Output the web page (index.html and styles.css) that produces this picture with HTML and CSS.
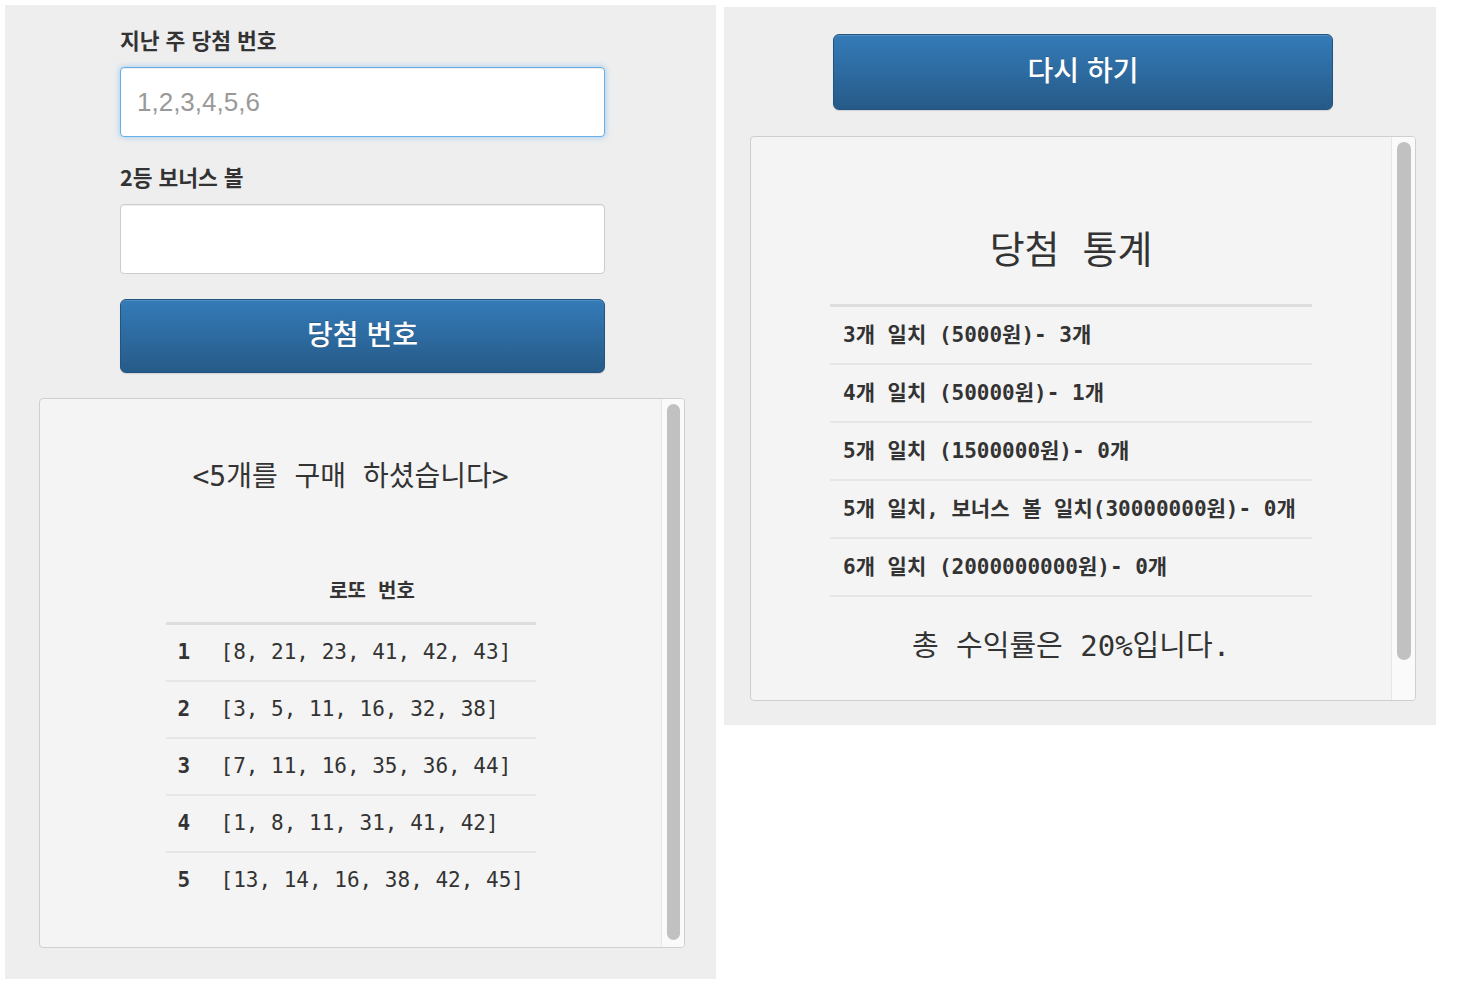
FILE: index.html
```html
<!DOCTYPE html>
<html lang="ko">
<head>
<meta charset="utf-8">
<title>로또</title>
<link rel="stylesheet" href="styles.css">
</head>
<body>
<div class="page">
  <section class="panel panel-left">
    <form class="form">
      <label class="label">지난 주 당첨 번호</label>
      <input class="input input-focus" type="text" placeholder="1,2,3,4,5,6">
      <label class="label label-second">2등 보너스 볼</label>
      <input class="input" type="text">
      <button class="btn btn-submit" type="button">당첨 번호</button>
    </form>
    <div class="box box-left">
      <div class="box-body">
        <h2 class="buy-title">&lt;5개를 구매 하셨습니다&gt;</h2>
        <table class="lotto">
          <colgroup><col class="col-no"><col></colgroup>
          <thead>
            <tr><th></th><th>로또 번호</th></tr>
          </thead>
          <tbody>
            <tr><td class="no">1</td><td>[8, 21, 23, 41, 42, 43]</td></tr>
            <tr><td class="no">2</td><td>[3, 5, 11, 16, 32, 38]</td></tr>
            <tr><td class="no">3</td><td>[7, 11, 16, 35, 36, 44]</td></tr>
            <tr><td class="no">4</td><td>[1, 8, 11, 31, 41, 42]</td></tr>
            <tr><td class="no">5</td><td>[13, 14, 16, 38, 42, 45]</td></tr>
          </tbody>
        </table>
      </div>
      <div class="track track-left"><div class="thumb"></div></div>
    </div>
  </section>

  <section class="panel panel-right">
    <button class="btn btn-retry" type="button">다시 하기</button>
    <div class="box box-right">
      <div class="box-body">
        <h2 class="stats-title">당첨 통계</h2>
        <ul class="stats">
          <li>3개 일치 (5000원)- 3개</li>
          <li>4개 일치 (50000원)- 1개</li>
          <li>5개 일치 (1500000원)- 0개</li>
          <li>5개 일치, 보너스 볼 일치(30000000원)- 0개</li>
          <li>6개 일치 (2000000000원)- 0개</li>
        </ul>
        <p class="yield">총 수익률은 20%입니다.</p>
      </div>
      <div class="track track-right"><div class="thumb"></div></div>
    </div>
  </section>
</div>
</body>
</html>
```

FILE: styles.css
```css
* { box-sizing: border-box; }

html, body {
  margin: 0;
  padding: 0;
  background: #ffffff;
}

body {
  color: #333333;
  font-family: "Noto Sans CJK KR", "Liberation Sans", sans-serif;
}

.page {
  display: flex;
  align-items: flex-start;
  gap: 8px;
  padding: 5px 0 0 5px;
}

.panel {
  background: #eeeeee;
}

.panel-left {
  width: 711px;
  height: 974px;
  padding: 23px 0 0 0;
}

.panel-right {
  width: 712px;
  height: 718px;
  margin-top: 2px;
  padding: 27px 0 0 0;
}

/* ---------- form ---------- */
.form {
  display: flex;
  flex-direction: column;
  width: 485px;
  margin-left: 115px;
}

.label {
  display: block;
  font-family: "Noto Sans CJK KR", sans-serif;
  font-weight: 700;
  font-size: 21.5px;
  line-height: 24px;
  color: #333333;
  margin-bottom: 15px;
}

.label-second {
  margin-top: 28px;
}

.input {
  display: block;
  width: 485px;
  height: 70px;
  padding: 0 16px;
  border: 1px solid #cccccc;
  border-radius: 4px;
  background: #ffffff;
  box-shadow: inset 0 1px 1px rgba(0, 0, 0, 0.075);
  font-family: "Liberation Sans", Arial, sans-serif;
  font-size: 26px;
  color: #555555;
  outline: none;
}

.input::placeholder {
  color: #999999;
}

.input-focus {
  border-color: #66afe9;
  box-shadow: inset 0 1px 1px rgba(0, 0, 0, 0.075), 0 0 6px rgba(102, 175, 233, 0.6);
}

.btn {
  display: block;
  border: 1px solid #245580;
  border-radius: 6px;
  background: linear-gradient(to bottom, #347bb8 0%, #265a88 100%);
  box-shadow: inset 0 1px 0 rgba(255, 255, 255, 0.15), 0 1px 1px rgba(0, 0, 0, 0.12);
  color: #ffffff;
  font-family: "Noto Sans CJK KR", sans-serif;
  font-size: 28px;
  font-weight: 500;
  text-shadow: 0 -1px 0 rgba(0, 0, 0, 0.2);
  cursor: pointer;
  padding: 0 0 6px 0;
}

.btn-submit {
  width: 485px;
  height: 74px;
  margin-top: 25px;
}

.btn-retry {
  width: 500px;
  height: 76px;
  margin-left: 109px;
}

/* ---------- result boxes ---------- */
.box {
  display: flex;
  background: #f4f4f4;
  border: 1px solid #cfcfcf;
  border-radius: 4px;
  overflow: hidden;
}

.box-left {
  width: 646px;
  height: 550px;
  margin: 25px 0 0 34px;
}

.box-right {
  width: 666px;
  height: 565px;
  margin: 26px 0 0 26px;
}

.box-body {
  flex: 1;
  display: flex;
  flex-direction: column;
  align-items: center;
  font-family: "DejaVu Sans Mono", "Noto Sans CJK KR", monospace;
}

.track {
  flex: 0 0 auto;
  background: #fafafa;
  border-left: 1px solid #e6e6e6;
  display: flex;
  justify-content: center;
}

.track-left {
  width: 23px;
  padding: 5px 0 7px 0;
}

.track-right {
  width: 24px;
  padding: 5px 0 40px 1px;
}

.thumb {
  width: 13px;
  height: 100%;
  background: #c1c1c1;
  border-radius: 7px;
}

.track-right .thumb {
  width: 14px;
}

/* ---------- purchased list ---------- */
.buy-title {
  margin: 61px 0 0 0;
  font-size: 28px;
  line-height: 33px;
  font-weight: 400;
  color: #333333;
}

.lotto {
  width: 370px;
  margin-top: 76px;
  border-collapse: collapse;
  table-layout: fixed;
  font-size: 21px;
  color: #333333;
}

.col-no {
  width: 43px;
}

.lotto th {
  padding: 10px 12px 19px 12px;
  font-size: 20px;
  line-height: 24px;
  font-weight: 700;
  text-align: center;
  border-bottom: 3px solid #dddddd;
}

.lotto td {
  padding: 16px 12px;
  line-height: 23px;
  border-top: 2px solid #e6e6e6;
  text-align: left;
  white-space: nowrap;
}

.lotto tbody tr:first-child td {
  border-top: none;
}

.lotto td.no {
  font-weight: 700;
  padding-left: 12px;
  padding-right: 0;
}

/* ---------- stats ---------- */
.stats-title {
  margin: 91px 0 0 0;
  font-size: 38px;
  line-height: 45px;
  font-weight: 400;
  color: #333333;
}

.stats {
  list-style: none;
  margin: 31px 0 0 0;
  padding: 0;
  width: 482px;
  border-top: 3px solid #dddddd;
}

.stats li {
  padding: 16px 13px;
  line-height: 24px;
  font-size: 21px;
  font-weight: 700;
  border-bottom: 2px solid #e6e6e6;
  white-space: nowrap;
}

.yield {
  margin: 32px 0 0 0;
  font-size: 29px;
  line-height: 34px;
  color: #333333;
}
```
